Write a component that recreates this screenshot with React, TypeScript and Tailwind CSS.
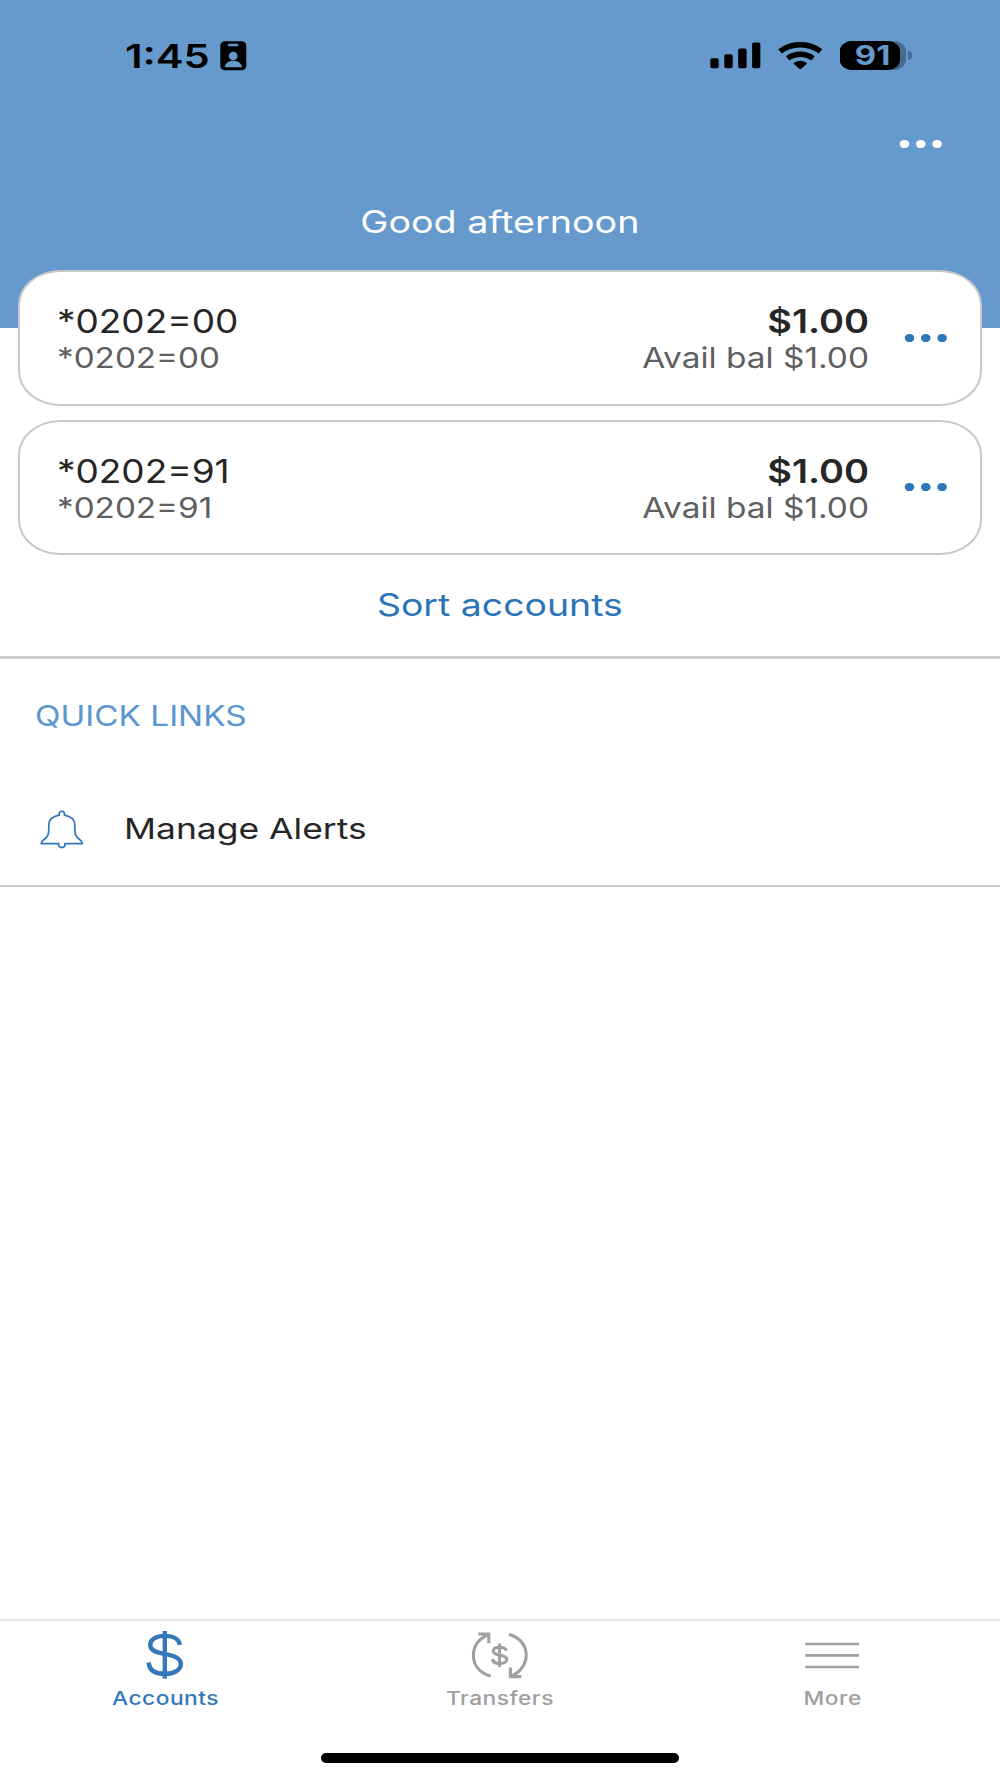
import type { ReactNode } from "react";
import clsx from "clsx";

type WideProps = { children: ReactNode; className?: string };

// Inter set on an expanded width
const Wide = ({ children, className }: WideProps) => (
  <span className={clsx("block whitespace-nowrap", className)}>{children}</span>
);

const Dots = ({ className }: { className?: string }) => (
  <svg width="44" height="10" viewBox="0 0 44 10" className={className}>
    <ellipse cx="5.5" cy="5" rx="4.8" ry="4.1" fill="currentColor" />
    <ellipse cx="21.8" cy="5" rx="4.8" ry="4.1" fill="currentColor" />
    <ellipse cx="38.1" cy="5" rx="4.8" ry="4.1" fill="currentColor" />
  </svg>
);

const BadgeIcon = () => (
  <svg width="27" height="30" viewBox="0 0 27 30">
    <rect x="0.3" y="0.3" width="26" height="29" rx="4.5" fill="#000" />
    <rect x="8" y="2.8" width="10.4" height="2.5" rx="1.1" fill="#6699cc" />
    <ellipse cx="13.2" cy="15" rx="4.4" ry="4.2" fill="#6699cc" />
    <path d="M4.8 26.2 C5.5 21.8 9 19.8 13.3 19.8 C17.6 19.8 21.2 21.8 22 26.2 Z" fill="#6699cc" />
  </svg>
);

const SignalIcon = () => (
  <svg width="51" height="27" viewBox="0 0 51 27">
    <rect x="0.3" y="16.3" width="8.4" height="10" rx="1.8" />
    <rect x="14.3" y="12.2" width="8.4" height="14.1" rx="1.8" />
    <rect x="28.2" y="6.4" width="8.4" height="19.9" rx="1.8" />
    <rect x="42.1" y="0.5" width="8.2" height="25.8" rx="1.8" />
  </svg>
);

const WifiIcon = () => (
  <svg width="45" height="28" viewBox="0 0 45 28" fill="none">
    <path d="M2 9.4 C13.5 0.5 31 0.5 42.5 9.4" stroke="#000" strokeWidth="5.5" />
    <path d="M9.6 16.4 C17 10.9 27.5 10.9 35 16.4" stroke="#000" strokeWidth="5.4" />
    <path d="M15.4 21.4 C19.3 17.8 25.2 17.8 29.1 21.4 L23.2 26.7 Q22.3 27.5 21.4 26.7 Z" fill="#000" />
  </svg>
);

const Battery = () => (
  <div className="flex items-center gap-[2px]">
    <div className="flex h-[29px] w-[66px] rounded-[12px_/_10px] bg-linear-to-r from-black from-50% to-[#476b8f] to-50%">
      <div className="flex h-full w-[60px] items-center justify-center rounded-[12px_/_10px] bg-linear-to-r from-black to-black pl-[5px]">
        <Wide className="scale-x-[1.22] text-[27px] leading-[29px] font-bold text-[#6699cc]">
          91
        </Wide>
      </div>
    </div>
    <div className="h-[9px] w-[4px] rounded-r-full bg-[#476b8f]" />
  </div>
);

const BellIcon = () => (
  <svg
    width="44"
    height="39"
    viewBox="0 0 44 39"
    fill="none"
    stroke="#2f77bb"
    strokeWidth="1.7"
    strokeLinejoin="round"
    strokeLinecap="round"
  >
    <path d="M18.7 33.6 H1.2 C1.2 32 2 31 4 29.5 C8 26.3 8.8 24.5 8.8 18.5 V15 C8.8 9.5 13 6.3 19.2 5.2 V3.8 C19.2 0.4 24.4 0.4 24.4 3.8 V5.2 C30.6 6.3 34.8 9.5 34.8 15 V18.5 C34.8 24.5 35.6 26.3 39.6 29.5 C41.6 31 42.4 32 42.4 33.6 H24.9" />
    <path d="M18.4 33.8 C18.6 38.9 25 38.9 25.2 33.8" />
  </svg>
);

const DollarIcon = () => (
  <svg width="38" height="49" viewBox="0 0 38 49" fill="none" stroke="currentColor" strokeWidth="4.4">
    <path d="M18.8 1 V48.6" />
    <path d="M33.8 15 C33.2 8.8 27 5.9 18.8 5.9 C10 5.9 4.2 9.5 4.2 14.7 C4.2 20.3 9.5 22.1 18.5 23.9 C28 25.8 34.8 27.8 34.8 34.1 C34.8 40.2 28 43.8 19 43.8 C9.5 43.8 3.2 40.2 2.7 32.5" />
  </svg>
);

const TransferIcon = () => (
  <svg width="60" height="49" viewBox="0 0 60 49" fill="none" stroke="currentColor" strokeWidth="3.1">
    <path d="M20.5 46.3 C9 42.5 3.4 34.5 3.4 25.5 C3.4 16 9 8.5 19 4.4" />
    <path d="M8.3 4 H18.8 V13.2" />
    <path d="M39 4.2 C50 7.8 56.2 15.5 56.2 25.5 C56.2 34 50.5 42 41 46.4" />
    <path d="M40.4 37.6 V46.6 H51.2" />
    <path d="M29.5 13.6 V37" />
    <path d="M36.3 20.8 C35.8 18.4 33 17.2 29.6 17.2 C25.6 17.2 23.3 18.7 23.3 21 C23.3 23.4 25.6 24.3 29.6 25.1 C34 26 36.8 26.9 36.8 29.6 C36.8 32 33.8 33.5 29.8 33.5 C25.6 33.5 22.8 32 22.5 29" />
  </svg>
);

const MenuIcon = () => (
  <svg width="55" height="49" viewBox="0 0 55 49" stroke="currentColor" strokeWidth="2.7">
    <path d="M0.3 14 H54 M0.3 25.4 H54 M0.3 37 H54" />
  </svg>
);

const accounts = [
  { name: "*0202=00", balance: "$1.00" },
  { name: "*0202=91", balance: "$1.00" },
];

const tabs = [
  { label: "Accounts", icon: <DollarIcon />, className: "pr-[3px] text-[#3478b9]" },
  { label: "Transfers", icon: <TransferIcon />, className: "text-[#a0a0a0]" },
  { label: "More", icon: <MenuIcon />, className: "pr-[1px] text-[#a0a0a0]" },
];

const App = () => {
  return (
    <div className="flex h-[1778px] w-[1000px] flex-col overflow-hidden bg-white font-['Inter',sans-serif] text-[#262626]">
      {/* Header */}
      <header className="h-[328px] shrink-0 bg-[#6699cc]">
        <div className="flex h-[112px] items-center justify-between pr-[88px] pl-[124.5px] text-black">
          <div className="flex items-center">
            <Wide className="w-[95.5px] origin-left scale-x-[1.26] text-[33px] leading-[34px] font-semibold">
              1:45
            </Wide>
            <BadgeIcon />
          </div>
          <div className="flex items-center pb-[1px]">
            <SignalIcon />
            <div className="mr-[17px] ml-[17px]">
              <WifiIcon />
            </div>
            <Battery />
          </div>
        </div>
        <div className="flex h-[64px] items-center justify-end pr-[57.5px] text-white">
          <button type="button" className="block">
            <Dots />
          </button>
        </div>
        <h1 className="mt-[28px] flex justify-center text-white">
          <Wide className="scale-x-[1.215] text-[31px] leading-[36px] font-normal">
            Good afternoon
          </Wide>
        </h1>
      </header>

      {/* Accounts */}
      <main className="relative -mt-[58px] flex-1">
        <div className="flex flex-col gap-[14px] px-[18px]">
          {accounts.map((account) => (
            <div
              key={account.name}
              className="flex h-[135.5px] items-center rounded-[42px_/_35px] border-2 border-[#c8c8c8] bg-white pr-[32px] pl-[36.5px]"
            >
              <div className="flex-1 pt-[5px]">
                <Wide className="origin-left scale-x-[1.155] text-[32px] leading-[36px]">
                  {account.name}
                </Wide>
                <Wide className="origin-left scale-x-[1.187] text-[28px] leading-[36px] text-[#5f5f5f]">
                  {account.name}
                </Wide>
              </div>
              <div className="pt-[5px] text-right">
                <Wide className="origin-right scale-x-[1.185] text-[32px] leading-[36px] font-semibold">
                  {account.balance}
                </Wide>
                <Wide className="origin-right scale-x-[1.193] text-[28px] leading-[36px] text-[#5f5f5f]">
                  Avail bal {account.balance}
                </Wide>
              </div>
              <button type="button" className="ml-[34.5px] text-[#2f77bb]">
                <Dots />
              </button>
            </div>
          ))}
        </div>

        <div className="flex h-[104px] justify-center border-b-[3px] border-[#cccccc] pt-[31.5px] text-[#2b74b8]">
          <Wide className="scale-x-[1.207] text-[31px] leading-[36px]">
            Sort accounts
          </Wide>
        </div>

        {/* Quick links */}
        <section className="h-[227.5px] border-b-2 border-[#c8c8c8]">
          <h2 className="pt-[39px] pl-[35.3px] text-[#5b96cf]">
            <Wide className="origin-left scale-x-[1.19] text-[28px] leading-[36px] font-normal">
              QUICK LINKS
            </Wide>
          </h2>
          <div className="mt-[75px] flex h-[40px] items-center pl-[40px]">
            <BellIcon />
            <Wide className="ml-[39.5px] origin-left scale-x-[1.222] text-[29px] leading-[36px]">
              Manage Alerts
            </Wide>
          </div>
        </section>
      </main>

      {/* Tab bar */}
      <nav className="grid h-[134px] shrink-0 grid-cols-3 border-t-2 border-[#e8e8e8]">
        {tabs.map((tab) => (
          <div
            key={tab.label}
            className={clsx("flex flex-col items-center pt-[9px]", tab.className)}
          >
            {tab.icon}
            <Wide className="mt-[8px] scale-x-[1.23] text-[18.5px] leading-[22px] font-medium tracking-[0.4px]">
              {tab.label}
            </Wide>
          </div>
        ))}
      </nav>
      <div className="h-[25px] shrink-0">
        <div className="mx-auto h-[10px] w-[358px] rounded-full bg-black" />
      </div>
    </div>
  );
};

export default App;
